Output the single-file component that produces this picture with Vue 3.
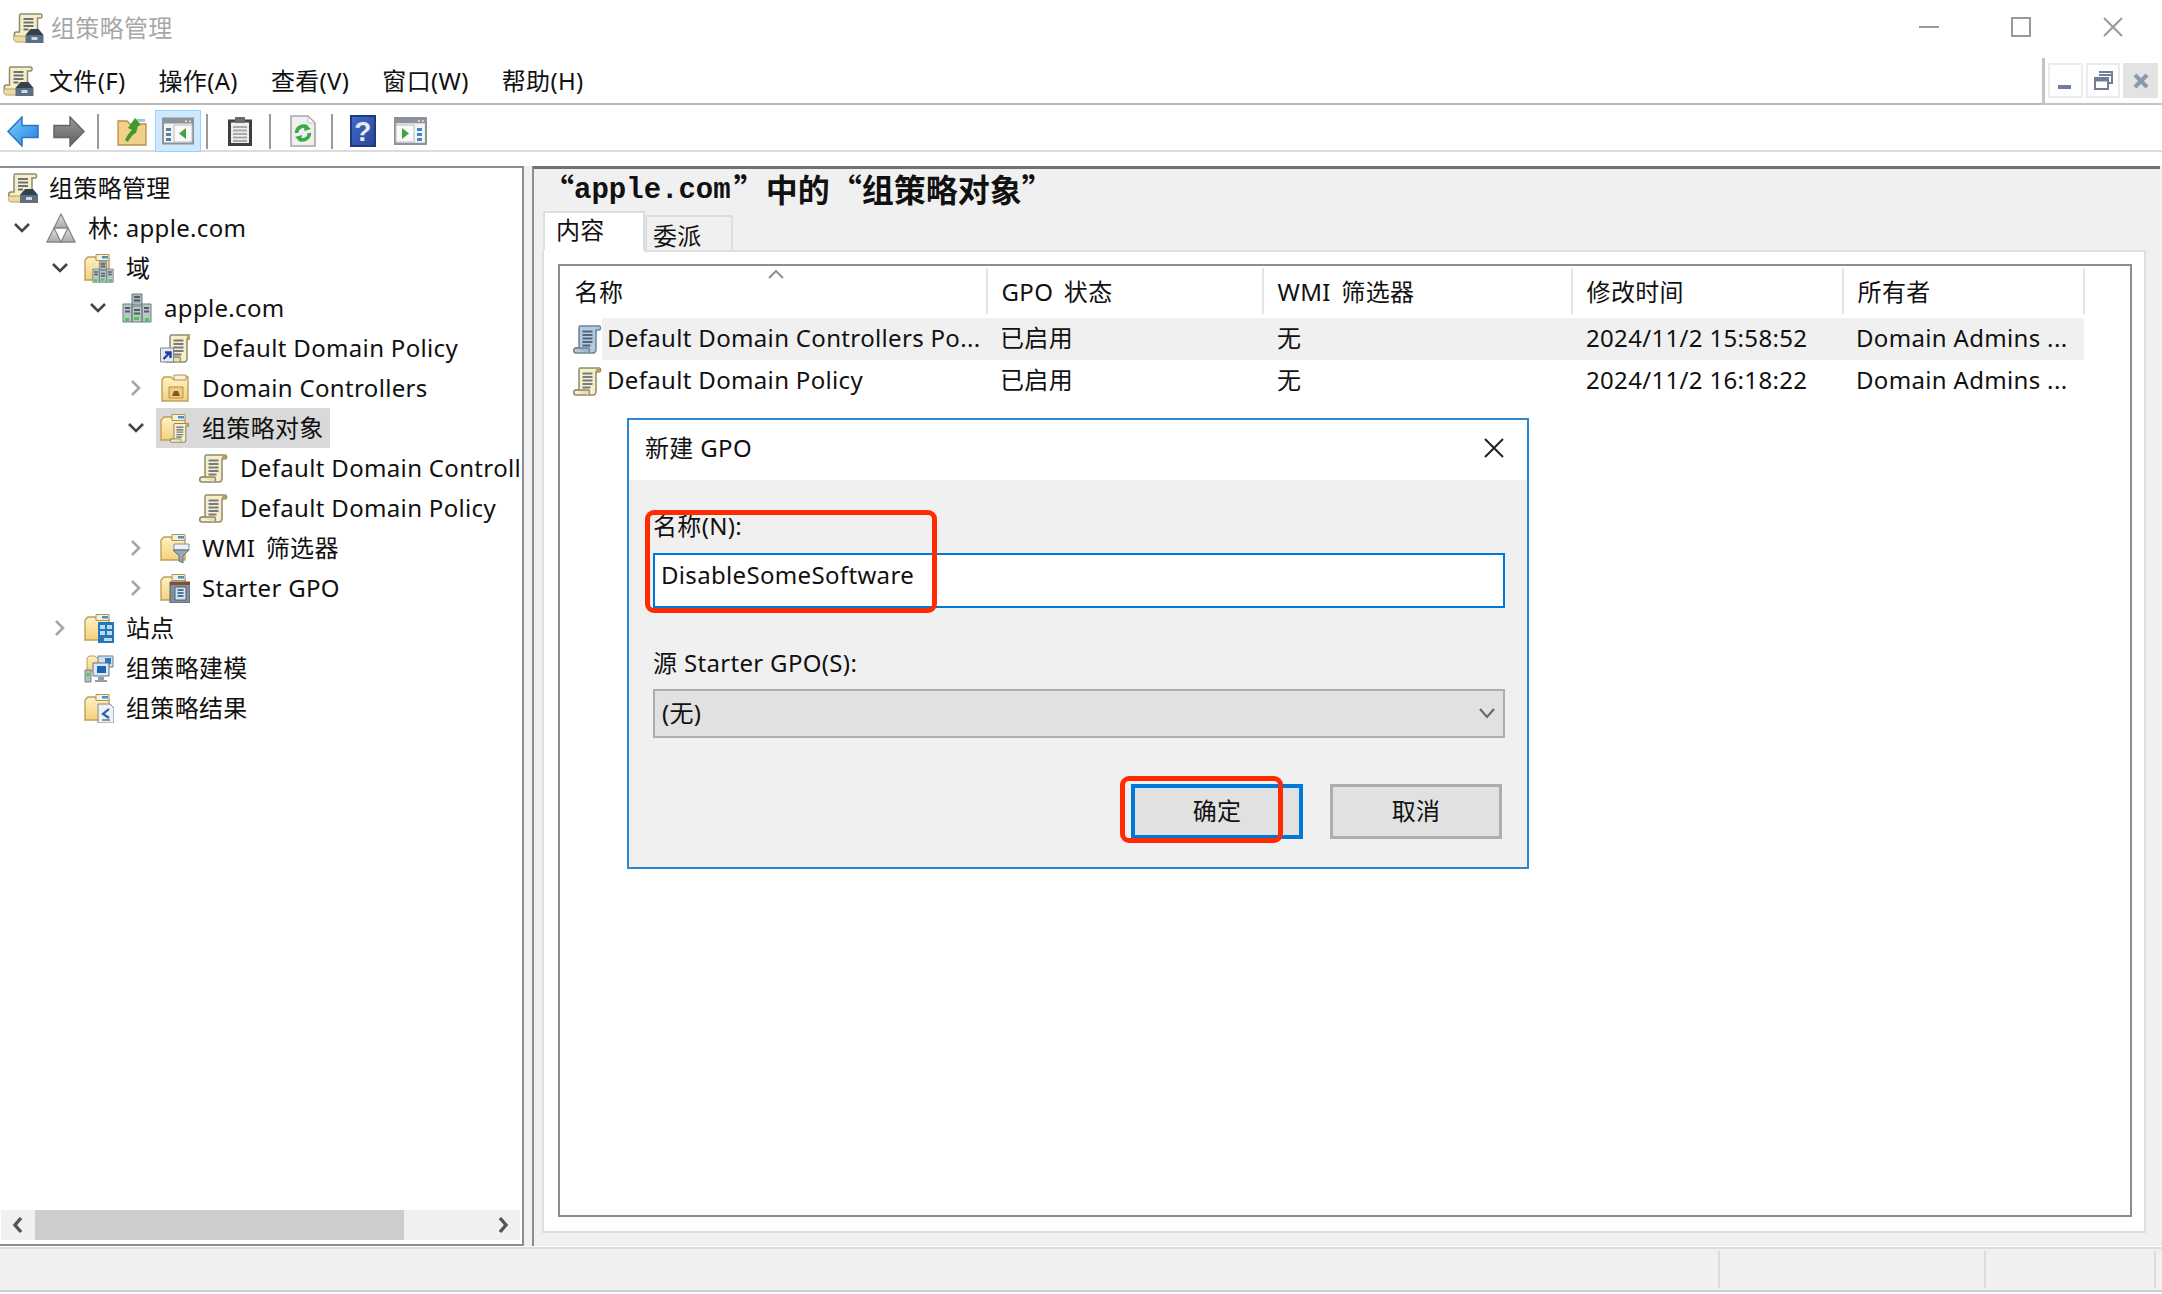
<script setup>
const menus = ['文件(F)', '操作(A)', '查看(V)', '窗口(W)', '帮助(H)']
const tree = [
  { level: 1, chev: 'down', icon: 'i-forest', text: '林: apple.com' },
  { level: 2, chev: 'down', icon: 'i-domains', text: '域' },
  { level: 3, chev: 'down', icon: 'i-servers', text: 'apple.com' },
  { level: 4, chev: '', icon: 'i-gpolink', text: 'Default Domain Policy' },
  { level: 4, chev: 'right', icon: 'i-ou', text: 'Domain Controllers' },
  { level: 4, chev: 'down', icon: 'i-gpofolder', text: '组策略对象', selected: true },
  { level: 5, chev: '', icon: 'i-scroll', text: 'Default Domain Controll' },
  { level: 5, chev: '', icon: 'i-scroll', text: 'Default Domain Policy' },
  { level: 4, chev: 'right', icon: 'i-wmi', text: 'WMI 筛选器', wide: true },
  { level: 4, chev: 'right', icon: 'i-starter', text: 'Starter GPO' },
  { level: 2, chev: 'right', icon: 'i-sites', text: '站点' },
  { level: 2, chev: '', icon: 'i-model', text: '组策略建模' },
  { level: 2, chev: '', icon: 'i-results', text: '组策略结果' },
]
const columns = [
  { label: '名称', width: 428 },
  { label: 'GPO 状态', width: 276 },
  { label: 'WMI 筛选器', width: 309 },
  { label: '修改时间', width: 271 },
  { label: '所有者', width: 241 },
]
const rows = [
  { icon: 'i-scroll-blue', name: 'Default Domain Controllers Po...', state: '已启用', wmi: '无', time: '2024/11/2 15:58:52', owner: 'Domain Admins ...', hot: true },
  { icon: 'i-scroll', name: 'Default Domain Policy', state: '已启用', wmi: '无', time: '2024/11/2 16:18:22', owner: 'Domain Admins ...' },
]
const indent = (level) => ({ paddingLeft: 3 + 38 * (level - 1) + 'px' })
</script>

<template>
  <div class="app">
    <svg class="defs" aria-hidden="true">
      <defs>
        <linearGradient id="g-folder" x1="0" y1="0" x2="0" y2="1"><stop offset="0" stop-color="#fdf1c4"/><stop offset="1" stop-color="#f3d27f"/></linearGradient>
        <linearGradient id="g-back" x1="0" y1="0" x2="1" y2="1"><stop offset="0" stop-color="#7fd2ff"/><stop offset="1" stop-color="#1f7ddb"/></linearGradient>
        <linearGradient id="g-fwd" x1="0" y1="0" x2="0" y2="1"><stop offset="0" stop-color="#9a9a9a"/><stop offset="1" stop-color="#5f5f5f"/></linearGradient>
        <linearGradient id="g-tri" x1="0" y1="0" x2="0" y2="1"><stop offset="0" stop-color="#e4e4e4"/><stop offset="1" stop-color="#a9a9a9"/></linearGradient>
        <linearGradient id="g-help" x1="0" y1="0" x2="1" y2="1"><stop offset="0" stop-color="#3f6ccb"/><stop offset="1" stop-color="#27459a"/></linearGradient>
      </defs>
      <symbol id="i-scroll" viewBox="0 0 30 30">
        <path d="M8 2H27c2 0 2 4 0 4h-3v19c0 2-1 4-3 4H4c-3 0-3-5 0-5h3V5c0-2 0-3 1-3z" fill="#f7efc8" stroke="#8e8a72" stroke-width="1.500"/>
        <path d="M3 24H16c2 0 2 4 0 5" fill="#eadfae" stroke="#8e8a72" stroke-width="1.300"/>
        <path d="M10.500 7.500h10M10.500 11h10M10.500 14.500h10M10.500 18h10M10.500 21.500h8" stroke="#777c82" stroke-width="2"/>
        <path d="M24 2h4v4h-4z" fill="#c19a5e"/>
      </symbol>
      <symbol id="i-scroll-blue" viewBox="0 0 30 30">
        <path d="M8 2H27c2 0 2 4 0 4h-3v19c0 2-1 4-3 4H4c-3 0-3-5 0-5h3V5c0-2 0-3 1-3z" fill="#b4cadf" stroke="#6e8296" stroke-width="1.500"/>
        <path d="M3 24H16c2 0 2 4 0 5" fill="#9fb8cf" stroke="#6e8296" stroke-width="1.300"/>
        <path d="M10.500 7.500h10M10.500 11h10M10.500 14.500h10M10.500 18h10M10.500 21.500h8" stroke="#4f6479" stroke-width="2"/>
      </symbol>
      <symbol id="i-gpm" viewBox="0 0 30 30">
        <path d="M7 1H27c2 0 2 4 0 4h-3v19H3c-3 0-3-5 0-5h3V4c0-2 0-3 1-3z" fill="#f7efc8" stroke="#8e8a72" stroke-width="1.500"/>
        <path d="M10 6h10M10 9.500h10M10 13h10M10 16.500h5" stroke="#6f7378" stroke-width="2"/>
        <path d="M0 23h15v6H3c-3 0-3-4-3-6z" fill="#ecdca0" stroke="#b3a26f"/>
        <path d="M12 22h18v8H12z" fill="#5a6f82"/>
        <path d="M12 22l5-6h8l5 6z" fill="#34424f"/>
        <path d="M18 24h6v3h-6z" fill="#cfd9e2"/>
      </symbol>
      <symbol id="i-forest" viewBox="0 0 30 30">
        <path d="M15 1l7 14H8z" fill="url(#g-tri)" stroke="#868686" stroke-width="1.300"/>
        <path d="M8 15l7 14H1z" fill="url(#g-tri)" stroke="#868686" stroke-width="1.300"/>
        <path d="M22 15l7 14H15z" fill="url(#g-tri)" stroke="#868686" stroke-width="1.300"/>
      </symbol>
      <symbol id="i-folder" viewBox="0 0 30 30">
        <path d="M1 27V7l3-3h7l2 2h12v21z" fill="url(#g-folder)" stroke="#c49f55" stroke-width="1.400"/>
        <path d="M12 1.500h13v6H12z" fill="#f7efd6" stroke="#b1945b"/>
        <path d="M18 3h6v2.500h-6z" fill="#3f94cf"/>
      </symbol>
      <symbol id="i-serverset" viewBox="0 0 30 30">
        <g stroke="#6d7a80" stroke-width="1">
          <path d="M10 1h10v11H10z" fill="#a9b5ba"/>
          <path d="M1 11h9v18H1zM20 11h9v18h-9zM10 13h10v16H10z" fill="#bcc6ca"/>
        </g>
        <path d="M3 15h5M3 18.500h5M22 15h5M22 18.500h5M12 4h6M12 7.500h6M12 17h6M12 20.500h6" stroke="#4f5d64" stroke-width="2"/>
        <path d="M12 24h5v3h-5zM3 25h4v3H3zM23 25h4v3h-4z" fill="#3fd03b"/>
      </symbol>
      <symbol id="i-servers" viewBox="0 0 30 30"><use href="#i-serverset"/></symbol>
      <symbol id="i-domains" viewBox="0 0 30 30">
        <use href="#i-folder"/>
        <use href="#i-serverset" x="8" y="8" width="22" height="22"/>
      </symbol>
      <symbol id="i-gpolink" viewBox="0 0 30 30">
        <use href="#i-scroll" x="3"/>
        <path d="M0.500 15h13v14h-13z" fill="#e8e8ee" stroke="#85858f"/>
        <path d="M3.500 26l6-6M5 19.500h5.500v5.500" stroke="#1f3fa5" stroke-width="2.400" fill="none"/>
      </symbol>
      <symbol id="i-ou" viewBox="0 0 30 30">
        <path d="M2 28V7l2-3h7l2 2h10l3-2h2v24z" fill="url(#g-folder)" stroke="#c49f55" stroke-width="1.400"/>
        <path d="M14 2h12v5H14z" fill="#f7efd6" stroke="#b1945b"/>
        <path d="M9 14h14v11H9z" fill="#efcd80" stroke="#b98f44"/>
        <path d="M12 23l2-5h4l2 5z" fill="#855725"/>
      </symbol>
      <symbol id="i-gpofolder" viewBox="0 0 30 30">
        <use href="#i-folder"/>
        <use href="#i-scroll" x="9" y="9" width="21" height="21"/>
      </symbol>
      <symbol id="i-wmi" viewBox="0 0 30 30">
        <use href="#i-folder"/>
        <path d="M14 11h15v6H14z" fill="#eef2f4" stroke="#84919a"/>
        <path d="M13 17h16l-6 6v7l-4-2v-5z" fill="#93a8b5" stroke="#5e727e"/>
      </symbol>
      <symbol id="i-starter" viewBox="0 0 30 30">
        <use href="#i-folder"/>
        <path d="M10 9h20v21H10z" fill="#868f99" stroke="#545d66"/>
        <path d="M10 9h20v3H10z" fill="#7f4f3a"/>
        <path d="M15 14h11v13H15z" fill="#d7e3ef" stroke="#456582"/>
        <path d="M17.500 17h6M17.500 20h6M17.500 23h6" stroke="#2f5274" stroke-width="1.700"/>
      </symbol>
      <symbol id="i-sites" viewBox="0 0 30 30">
        <use href="#i-folder"/>
        <path d="M14 9h16v21H14z" fill="#2478ba"/>
        <path d="M16 12h5v4h-5zM23 12h5v4h-5zM16 18h5v4h-5zM23 18h5v4h-5zM20 25h8v3h-8z" fill="#bcdcf2"/>
      </symbol>
      <symbol id="i-model" viewBox="0 0 30 30">
        <path d="M3 18V5l2-2h6l2 2h7v13z" fill="url(#g-folder)" stroke="#c49f55"/>
        <path d="M14 3h15v11H14z" fill="#d2dee9" stroke="#6f8090"/>
        <path d="M21 5h6v6h-6z" fill="#2a78c6"/>
        <path d="M9 10h16v13H9z" fill="#dfe8f0" stroke="#5e7082"/>
        <path d="M13 13h9v7h-9z" fill="#1b65b6"/>
        <path d="M1 17h6v12H1z" fill="#b3bcc1" stroke="#78848a"/>
        <path d="M2.500 20h3v3h-3z" fill="#3fd03b"/>
        <path d="M14 24h6v3h-6zM11 27h12v2H11z" fill="#929da5"/>
      </symbol>
      <symbol id="i-results" viewBox="0 0 30 30">
        <use href="#i-folder"/>
        <path d="M14 11h12l4 4v15H14z" fill="#eef0f2" stroke="#7f878e"/>
        <path d="M25 16l-6 5 6 4" stroke="#1b65b6" stroke-width="2.200" fill="none"/>
        <path d="M18 27h8" stroke="#75869a" stroke-width="1.700"/>
      </symbol>
      <symbol id="i-pane" viewBox="0 0 32 27">
        <path d="M1 1h30v25H1z" fill="#f3f3f3" stroke="#8d9398" stroke-width="2"/>
        <path d="M1 1h30v5H1z" fill="#8d9398"/>
        <path d="M23 3h2v1.500h-2zM27 3h2v1.500h-2z" fill="#e6e6e6"/>
      </symbol>
    </svg>

    <header class="titlebar">
      <div class="title">
        <svg class="title-icon"><use href="#i-gpm"/></svg>
        <span>组策略管理</span>
      </div>
      <div class="winbtns">
        <svg width="22" height="22" viewBox="0 0 22 22"><path d="M1 11h20" stroke="#999" stroke-width="2"/></svg>
        <svg width="22" height="22" viewBox="0 0 22 22"><path d="M2 2h18v18H2z" fill="none" stroke="#999" stroke-width="2"/></svg>
        <svg width="22" height="22" viewBox="0 0 22 22"><path d="M2 2l18 18M20 2L2 20" stroke="#999" stroke-width="2"/></svg>
      </div>
    </header>

    <nav class="menubar">
      <svg class="menu-icon"><use href="#i-gpm"/></svg>
      <div class="menus"><span v-for="m in menus" :key="m" class="menu">{{ m }}</span></div>
      <div class="mdi">
        <span class="mdi-btn"><svg width="20" height="20" viewBox="0 0 20 20"><path d="M3 14h13v4H3z" fill="#6e7f96"/></svg></span>
        <span class="mdi-btn"><svg width="20" height="20" viewBox="0 0 20 20"><path d="M6 1h13v11h-3M6 4h13" fill="none" stroke="#6e7f96" stroke-width="2"/><path d="M2 7h13v11H2z" fill="#fff" stroke="#6e7f96" stroke-width="2"/><path d="M2 9h13" stroke="#6e7f96" stroke-width="3"/></svg></span>
        <span class="mdi-btn closed"><svg width="18" height="18" viewBox="0 0 18 18"><path d="M3 3l12 12M15 3L3 15" stroke="#8a98ae" stroke-width="4"/></svg></span>
      </div>
    </nav>

    <div class="toolbar">
      <svg class="tb w32" viewBox="0 0 32 31"><path d="M1 15.500L15 1v8.500h16v12H15V30z" fill="url(#g-back)" stroke="#2d74c4" stroke-width="1.500"/></svg>
      <svg class="tb w32 gap" viewBox="0 0 32 31"><path d="M31 15.500L17 1v8.500H1v12h16V30z" fill="url(#g-fwd)" stroke="#666" stroke-width="1.500"/></svg>
      <i class="sep s1"></i>
      <svg class="tb f" viewBox="0 0 30 30"><path d="M1 29V5h9l3 3h16v21z" fill="#f3d088" stroke="#b88f4a" stroke-width="1.300"/><path d="M19 3h9v3h-9z" fill="#a8c6dc"/><path d="M8 24c3-6 5-8 7-10l-4-2 7-10 6 7-3 1-2 7c-3 1-6 5-8 9z" fill="#3f9a2e"/></svg>
      <span class="tb-hot"><svg width="32" height="28"><use href="#i-pane"/><path d="M4 11h5v3H4zM4 16h5v3H4zM4 21h5v3H4z" fill="#5b7ea3"/><path d="M12 8h18v17H12z" fill="#fafafa" stroke="#b8bcc0"/><path d="M24 11v11l-7-5.500z" fill="#3fa63a"/></svg></span>
      <i class="sep s2"></i>
      <svg class="tb clip" viewBox="0 0 24 29"><path d="M1.500 4h21v23.500h-21z" fill="#eee" stroke="#3f3f3f" stroke-width="3"/><path d="M7 0h10v6H7z" fill="#6a6a6a"/><path d="M5 10h14M5 13.500h14M5 17h14M5 20.500h14M5 24h14" stroke="#a8a8a8" stroke-width="2"/></svg>
      <i class="sep s3"></i>
      <svg class="tb doc" viewBox="0 0 26 32"><path d="M1 1h17l7 7v23H1z" fill="#f0f0f0" stroke="#a6a6a6" stroke-width="1.600"/><path d="M18 2v6h6" fill="#fff" stroke="#c4c4c4"/><path d="M6.500 18a7 7 0 0 1 11-5.500M19.500 18a7 7 0 0 1-11 5.500" fill="none" stroke="#35ad44" stroke-width="3.600"/><path d="M15 9l6 5-7 2zM11 27l-6-5 7-2z" fill="#35ad44"/></svg>
      <i class="sep s4"></i>
      <svg class="tb help" viewBox="0 0 26 32"><path d="M1 1h24v30H1z" fill="url(#g-help)" stroke="#1d3a80" stroke-width="2"/><text x="13" y="26" text-anchor="middle" class="help-q">?</text></svg>
      <svg class="tb pane2" width="33" height="28"><use href="#i-pane"/><path d="M23 11h5v3h-5zM23 16h5v3h-5zM23 21h5v3h-5z" fill="#3f86c9"/><path d="M2 8h18v17H2z" fill="#fafafa" stroke="#b8bcc0"/><path d="M8 11v11l7-5.500z" fill="#3fa63a"/></svg>
    </div>

    <main class="workspace">
      <aside class="left">
        <div class="tree">
          <div class="tree-row root">
            <svg class="ico"><use href="#i-gpm"/></svg>
            <span class="txt">组策略管理</span>
          </div>
          <div v-for="n in tree" :key="n.text + n.level" class="tree-row" :style="indent(n.level)">
            <span class="chev">
              <svg v-if="n.chev === 'down'" width="18" height="12" viewBox="0 0 18 12"><path d="M2 2l7 7 7-7" fill="none" stroke="#444" stroke-width="2.600"/></svg>
              <svg v-else-if="n.chev === 'right'" width="12" height="18" viewBox="0 0 12 18"><path d="M2 2l7 7-7 7" fill="none" stroke="#a6a6a6" stroke-width="2.600"/></svg>
            </span>
            <div class="node" :class="{ selected: n.selected }">
              <svg class="ico"><use :href="'#' + n.icon"/></svg>
              <span class="txt" :class="{ wide: n.wide }">{{ n.text }}</span>
            </div>
          </div>
        </div>
        <div class="hscroll">
          <svg class="sarrow" width="12" height="18" viewBox="0 0 12 18"><path d="M9 2L3 9l6 7" fill="none" stroke="#555" stroke-width="3.400"/></svg>
          <div class="track"><div class="thumb"></div></div>
          <svg class="sarrow" width="12" height="18" viewBox="0 0 12 18"><path d="M3 2l6 7-6 7" fill="none" stroke="#555" stroke-width="3.400"/></svg>
        </div>
      </aside>

      <section class="right">
        <h1 class="heading"><span class="cjk">“</span><span class="mono">apple.com</span><span class="cjk">”中的“组策略对象”</span></h1>
        <div class="tabs">
          <span class="tab active">内容</span>
          <span class="tab">委派</span>
        </div>
        <div class="panel">
          <div class="list">
            <div class="list-head">
              <div v-for="(c, i) in columns" :key="c.label" class="th" :class="{ first: i === 0 }" :style="{ width: c.width + 'px' }">
                <svg v-if="i === 0" class="sort" width="18" height="10" viewBox="0 0 18 10"><path d="M2 9l7-7 7 7" fill="none" stroke="#8a8a8a" stroke-width="1.800"/></svg>
                {{ c.label }}
              </div>
            </div>
            <div v-for="r in rows" :key="r.name" class="list-row">
              <svg class="row-ico"><use :href="'#' + r.icon"/></svg>
              <div class="cells" :class="{ hot: r.hot }">
                <span class="c c1">{{ r.name }}</span>
                <span class="c c2">{{ r.state }}</span>
                <span class="c c3">{{ r.wmi }}</span>
                <span class="c c4">{{ r.time }}</span>
                <span class="c c5">{{ r.owner }}</span>
              </div>
            </div>
          </div>
        </div>
      </section>

      <div class="dialog">
        <div class="dlg-title">
          <span>新建 GPO</span>
          <svg width="20" height="20" viewBox="0 0 20 20"><path d="M1 1l18 18M19 1L1 19" stroke="#222" stroke-width="2"/></svg>
        </div>
        <div class="dlg-body">
          <label class="lbl">名称(N):</label>
          <div class="input">DisableSomeSoftware</div>
          <label class="lbl second">源 Starter GPO(S):</label>
          <div class="select">
            <span>(无)</span>
            <svg width="18" height="12" viewBox="0 0 18 12"><path d="M2 2l7 8 7-8" fill="none" stroke="#666" stroke-width="2"/></svg>
          </div>
          <div class="btns">
            <span class="btn primary">确定</span>
            <span class="btn">取消</span>
          </div>
        </div>
        <div class="mark mark-name"></div>
        <div class="mark mark-ok"></div>
      </div>
    </main>

    <footer class="statusbar">
      <i class="cell c-a"></i>
      <i class="cell c-b"></i>
      <i class="cell c-c"></i>
    </footer>
  </div>
</template>

<style>
html, body { margin: 0; background: #fff; }
</style>

<style scoped>
.app {
  --pane: #8a8d96;
  position: relative;
  width: 2162px;
  height: 1294px;
  overflow: hidden;
  background: #fff;
  color: #111;
  font-family: "Noto Sans", "Noto Sans CJK SC", sans-serif;
  font-size: 24px;
  line-height: 32px;
  letter-spacing: 0.33px;
}
.defs { position: absolute; width: 0; height: 0; }
.titlebar {
  height: 58px;
  display: flex;
  justify-content: space-between;
  align-items: center;
  padding: 0 38px 2px 13px;
  box-sizing: border-box;
}
.title { display: flex; align-items: center; gap: 7px; color: #a8a8a8; }
.title-icon { width: 31px; height: 30px; }
.winbtns { display: flex; gap: 70px; padding-bottom: 3px; }
.menubar {
  height: 47px;
  border-bottom: 2px solid #b9b9b9;
  display: flex;
  align-items: center;
  padding-left: 3px;
  box-sizing: border-box;
  position: relative;
}
.menu-icon { width: 31px; height: 30px; }
.menus { display: flex; margin-left: 15px; gap: 33px; flex: 1; }
.menu { white-space: nowrap; }
.mdi {
  align-self: stretch;
  width: 120px;
  border-left: 3px solid #c4c4c4;
  display: flex;
  gap: 3px;
  padding: 5px 4px 5px 3px;
  box-sizing: border-box;
  margin-bottom: -2px;
  background: #fff;
  border-bottom: 2px solid #c4c4c4;
}
.mdi-btn {
  width: 35px;
  height: 35px;
  box-sizing: border-box;
  border: 2px solid #ececec;
  display: flex;
  align-items: center;
  justify-content: center;
}
.mdi-btn.closed { background: #e3e3e3; border-color: #e3e3e3; }
.toolbar {
  height: 47px;
  display: flex;
  align-items: center;
  padding: 7px 0 0 7px;
  box-sizing: border-box;
  border-bottom: 2px solid #dcdcdc;
}
.tb { flex: none; }
.w32 { width: 32px; height: 31px; }
.gap { margin-left: 14px; }
.sep { width: 2px; height: 35px; background: #9a9a9a; flex: none; }
.s1 { margin-left: 12px; }
.f { margin-left: 18px; width: 30px; height: 30px; }
.tb-hot {
  width: 46px;
  height: 42px;
  margin-left: 8px;
  box-sizing: border-box;
  background: #cde8ff;
  border: 1px solid #99d1ff;
  display: flex;
  align-items: center;
  justify-content: center;
  flex: none;
}
.s2 { margin-left: 5px; }
.clip { width: 24px; height: 29px; margin-left: 20px; }
.s3 { margin-left: 17px; }
.doc { width: 26px; height: 32px; margin-left: 19px; }
.s4 { margin-left: 15px; }
.help { width: 26px; height: 32px; margin-left: 17px; }
.help-q { fill: #e6e9f2; font: bold 28px "Liberation Sans", sans-serif; }
.pane2 { margin-left: 18px; }
.workspace {
  position: relative;
  height: 1080px;
  margin-top: 14px;
  display: flex;
  gap: 8px;
  padding-right: 2px;
  background: #f0f0f0;
  box-sizing: border-box;
}
.left {
  width: 524px;
  box-sizing: border-box;
  background: #fff;
  border-top: 2px solid var(--pane);
  border-right: 2px solid var(--pane);
  border-bottom: 2px solid var(--pane);
  display: flex;
  flex-direction: column;
  flex: none;
}
.tree { flex: 1; overflow: hidden; }
.tree-row {
  height: 40px;
  display: flex;
  align-items: center;
  white-space: nowrap;
  box-sizing: border-box;
}
.tree-row.root { padding-left: 8px; gap: 11px; }
.ico { width: 30px; height: 30px; flex: none; }
.chev {
  width: 38px;
  flex: none;
  display: flex;
  justify-content: center;
  align-items: center;
}
.node {
  display: flex;
  align-items: center;
  gap: 12px;
  height: 40px;
  padding: 0 6px 0 5px;
  margin-right: -6px;
}
.node.selected { background: #d9d9d9; margin-left: 1px; padding-left: 4px; }
.wide { word-spacing: 4px; }
.hscroll {
  height: 30px;
  margin: 0 2px 4px 1px;
  flex: none;
  background: #f0f0f0;
  display: flex;
  align-items: center;
}
.sarrow { width: 34px; flex: none; }
.track { flex: 1; height: 30px; }
.thumb { width: 369px; height: 100%; background: #cdcdcd; }
.right {
  flex: 1;
  min-width: 0;
  box-sizing: border-box;
  border-top: 3px solid #6f7078;
  border-left: 2px solid var(--pane);
  padding: 0 14px 13px 8px;
  display: flex;
  flex-direction: column;
  background: #f0f0f0;
}
.heading {
  margin: 0;
  height: 42px;
  display: flex;
  align-items: center;
  font-weight: 700;
  color: #111;
  white-space: pre;
  letter-spacing: 0;
}
.cjk { font: 700 32px "Noto Sans CJK SC", sans-serif; padding-bottom: 4px; }
.mono { font: 700 29px "Liberation Mono", monospace; margin-right: 3px; }
.tabs { display: flex; height: 41px; align-items: flex-end; margin-left: 1px; position: relative; z-index: 1; margin-bottom: -2px; }
.tab {
  width: 88px;
  height: 37px;
  box-sizing: border-box;
  border: 2px solid #dedede;
  background: #f0f0f0;
  padding-left: 6px;
  line-height: 38px;
}
.tab.active {
  width: 102px;
  height: 41px;
  background: #fff;
  border-bottom-color: #fff;
  padding-left: 11px;
  line-height: 34px;
}
.panel {
  flex: 1;
  background: #fff;
  border: 2px solid #dedede;
  padding: 12px 12px 14px 14px;
  display: flex;
}
.list {
  flex: 1;
  border: 2px solid var(--pane);
  background: #fff;
  padding-top: 2px;
  box-sizing: border-box;
}
.list-head { display: flex; height: 50px; }
.th {
  position: relative;
  box-sizing: border-box;
  padding: 1px 0 0 3px;
  display: flex;
  align-items: center;
  border-right: 2px solid #e5e5e5;
  flex: none;
  white-space: pre;
  height: 46px;
  word-spacing: 4px;
}
.th.first { padding-left: 4px; }
.sort { position: absolute; left: 207px; top: 1px; }
.list-row { display: flex; height: 42px; align-items: center; }
.row-ico { width: 30px; height: 30px; flex: none; margin-left: 12px; }
.cells { display: flex; height: 42px; align-items: center; white-space: nowrap; padding: 0 0 2px 5px; width: 1482px; box-sizing: border-box; }
.cells.hot { background: #f0f0f0; }
.c { display: block; flex: none; }
.c1 { width: 393px; }
.c2 { width: 277px; }
.c3 { width: 309px; }
.c4 { width: 270px; }
.c5 { width: 233px; }
.dialog {
  position: absolute;
  left: 627px;
  top: 252px;
  width: 902px;
  height: 451px;
  box-sizing: border-box;
  border: 2px solid #2f86d0;
  background: #f0f0f0;
  display: flex;
  flex-direction: column;
}
.dlg-title {
  height: 60px;
  flex: none;
  box-sizing: border-box;
  background: #fff;
  display: flex;
  align-items: center;
  justify-content: space-between;
  padding: 0 23px 5px 16px;
}
.dlg-body { padding: 30px 22px 0 24px; display: flex; flex-direction: column; }
.lbl { display: block; height: 32px; line-height: 32px; }
.input {
  margin-top: 11px;
  height: 55px;
  box-sizing: border-box;
  border: 2px solid #0078d7;
  background: #fff;
  padding: 4px 6px;
}
.second { margin-top: 39px; }
.select {
  margin-top: 10px;
  height: 49px;
  box-sizing: border-box;
  border: 2px solid #adadad;
  background: #e1e1e1;
  padding: 0 7px 2px;
  display: flex;
  align-items: center;
  justify-content: space-between;
}
.btns { display: flex; margin-top: 46px; gap: 27px; justify-content: flex-end; padding-right: 3px; }
.btn {
  width: 172px;
  height: 55px;
  box-sizing: border-box;
  border: 3px solid #adadad;
  background: #e1e1e1;
  display: flex;
  align-items: center;
  justify-content: center;
  padding-bottom: 1px;
}
.btn.primary { border: 4px solid #0078d7; }
.mark {
  position: absolute;
  box-sizing: border-box;
  border: 5px solid #ff2a00;
  border-radius: 9px;
  pointer-events: none;
}
.mark-name { left: 16px; top: 90px; width: 292px; height: 103px; }
.mark-ok { left: 491px; top: 356px; width: 163px; height: 67px; }
.statusbar {
  margin-top: 1px;
  height: 45px;
  box-sizing: border-box;
  background: #f0f0f0;
  border-top: 2px solid #dcdcdc;
  border-bottom: 2px solid #cfcfcf;
  display: flex;
  justify-content: flex-end;
  padding: 2px 6px 2px 0;
}
.cell { display: block; width: 2px; background: #dcdcdc; flex: none; }
.c-a { margin-right: 264px; }
.c-b { margin-right: 168px; }
</style>
